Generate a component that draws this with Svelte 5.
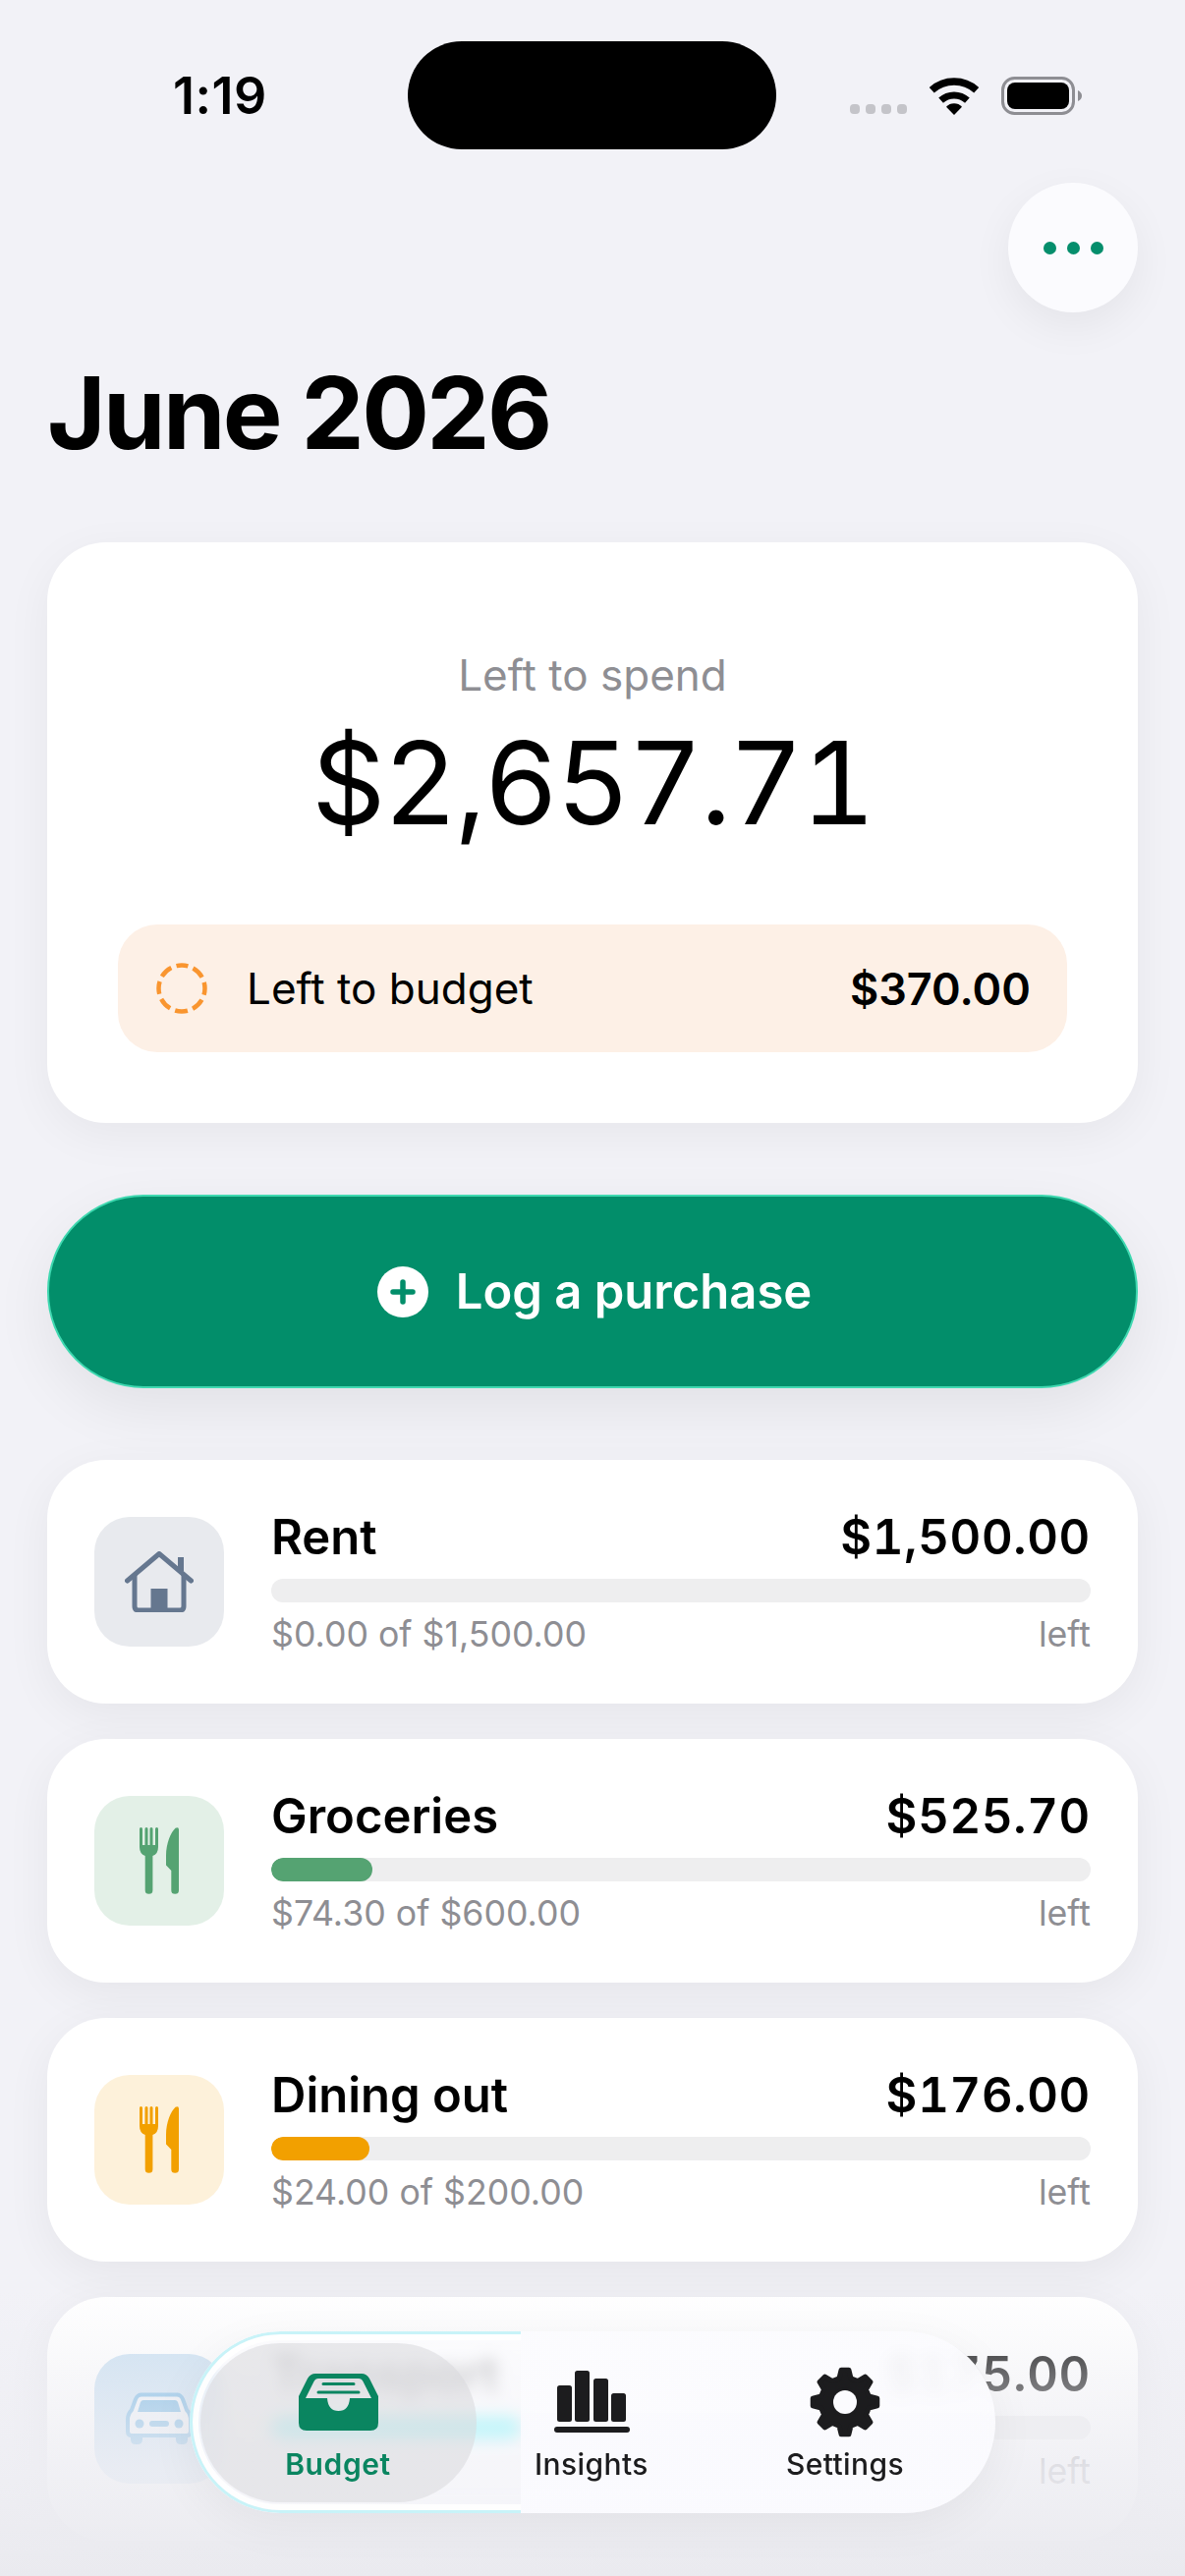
<script>
  // gear outline: 8 teeth, computed so they stay evenly spaced
  function gearPath() {
    const teeth = 8, cx = 36, cy = 36, outer = 33, root = 25;
    let pts = [];
    for (let i = 0; i < teeth; i++) {
      const a = (i * 2 * Math.PI) / teeth - Math.PI / 2;
      const step = Math.PI / teeth;
      pts.push([root, a - step * 0.62], [outer, a - step * 0.3], [outer, a + step * 0.3], [root, a + step * 0.62]);
    }
    const d = pts.map(([r, a], i) => (i ? 'L' : 'M') + (cx + r * Math.cos(a)).toFixed(2) + ' ' + (cy + r * Math.sin(a)).toFixed(2));
    return d.join(' ') + ' Z M36 24 a12 12 0 1 0 0.01 0 Z';
  }

  const rows = [
    { name: 'Rent', left: '$1,500.00', sub: '$0.00 of $1,500.00', pct: 0, kind: 'rent', icon: 'house' },
    { name: 'Groceries', left: '$525.70', sub: '$74.30 of $600.00', pct: 12.4, kind: 'groceries', icon: 'cutlery' },
    { name: 'Dining out', left: '$176.00', sub: '$24.00 of $200.00', pct: 12, kind: 'dining', icon: 'cutlery' },
    { name: 'Transport', left: '$175.00', sub: '', pct: 30.5, kind: 'transport', icon: 'car' }
  ];
</script>

<div class="page">
  <div class="status">
    <span class="time">1:19</span>
    <div class="island"></div>
    <div class="status-icons">
      <div class="signal"><i></i><i></i><i></i><i></i></div>
      <svg width="52" height="38" viewBox="0 0 52 38">
        <path d="M3.25 12.7 A34 34 0 0 1 48.75 12.7" fill="none" stroke="#000" stroke-width="7.5"/>
        <path d="M12.6 23.1 A20 20 0 0 1 39.4 23.1" fill="none" stroke="#000" stroke-width="7"/>
        <path d="M26 38 L18 29.8 A11 11 0 0 1 34 29.8 Z" fill="#000"/>
      </svg>
      <svg width="82" height="39" viewBox="0 0 82 39">
        <rect x="1.5" y="1.5" width="72" height="36" rx="12" fill="none" stroke="#8e8e93" stroke-width="3"/>
        <rect x="6" y="6" width="63" height="27" rx="8" fill="#000"/>
        <path d="M78 14 Q82 16 82 19.5 Q82 23 78 25 Z" fill="#8e8e93"/>
      </svg>
    </div>
  </div>

  <div class="top-action">
    <button class="menu-btn" aria-label="More"><i></i><i></i><i></i></button>
  </div>

  <h1>June 2026</h1>

  <section class="summary">
    <div class="summary-label">Left to spend</div>
    <div class="summary-amount">$2,657.71</div>
    <div class="to-budget">
      <svg width="52" height="52" viewBox="0 0 52 52">
        <circle cx="26" cy="26" r="23.5" fill="none" stroke="#f9952f" stroke-width="4.5" stroke-dasharray="13 5.45" stroke-dashoffset="6.5" transform="rotate(-90 26 26)"/>
      </svg>
      <span class="to-budget-label">Left to budget</span>
      <span class="to-budget-value">$370.00</span>
    </div>
  </section>

  <button class="log-btn">
    <svg width="52" height="52" viewBox="0 0 52 52">
      <circle cx="26" cy="26" r="26" fill="#fff"/>
      <path d="M26 16 V36 M16 26 H36" stroke="#028e6a" stroke-width="5.5" stroke-linecap="round"/>
    </svg>
    Log a purchase
  </button>

  <div class="rows">
    {#each rows as row}
      <div class="row {row.kind}">
        <div class="row-icon">
          {#if row.icon === 'house'}
            <svg width="70" height="62" viewBox="0 0 70 62">
              <path d="M54 6 H60 V20 H54 Z" fill="currentColor"/>
              <path d="M2.5 30 L35 2.5 L67.5 30" fill="none" stroke="currentColor" stroke-width="5" stroke-linecap="round" stroke-linejoin="round"/>
              <path d="M10 24 V56 Q10 60 14 60 H56 Q60 60 60 56 V24" fill="none" stroke="currentColor" stroke-width="5"/>
              <rect x="26.5" y="38" width="17" height="23" fill="currentColor"/>
            </svg>
          {:else if row.icon === 'cutlery'}
            <svg width="40" height="68" viewBox="0 0 40 68">
              <path d="M0 1.5 a1.5 1.5 0 0 1 3 0 V18 H5.5 V1.5 a1.5 1.5 0 0 1 3 0 V18 H10.5 V1.5 a1.5 1.5 0 0 1 3 0 V18 H16 V1.5 a1.5 1.5 0 0 1 3 0 V20 Q19 27 13.4 29 V64 a3.85 3.85 0 0 1 -7.7 0 V29 Q0 27 0 20 Z" fill="currentColor"/>
              <path d="M40 2.5 V64 a3.85 3.85 0 0 1 -7.7 0 V44 L27 38.5 V29 C27 16 32 5 36.5 0.8 Q40 -0.8 40 2.5 Z" fill="currentColor"/>
            </svg>
          {:else}
            <svg width="68" height="54" viewBox="0 0 68 54">
              <path d="M5 42 H17 V48 Q17 53 12 53 H10 Q5 53 5 48 Z M51 42 H63 V48 Q63 53 58 53 H56 Q51 53 51 48 Z" fill="currentColor"/>
              <path d="M16 2.5 H52 Q56 2.5 58 7 L62 18 Q66 22 66 28 V40 Q66 44 62 44 H6 Q2 44 2 40 V28 Q2 22 6 18 L10 7 Q12 2.5 16 2.5 Z" fill="#eef3f8" stroke="currentColor" stroke-width="4"/>
              <path d="M18 8 H50 Q52 8 53 10 L56 20 H12 L15 10 Q16 8 18 8 Z" fill="currentColor"/>
              <circle cx="14" cy="32" r="4.5" fill="currentColor"/>
              <circle cx="54" cy="32" r="4.5" fill="currentColor"/>
              <rect x="24" y="29" width="20" height="6" rx="3" fill="currentColor"/>
            </svg>
          {/if}
        </div>
        <div class="row-body">
          <div class="row-line">
            <span class="row-name">{row.name}</span>
            <span class="row-left">{row.left}</span>
          </div>
          <div class="bar"><div class="bar-fill" style:width="{row.pct}%"></div></div>
          <div class="row-sub">
            <span>{row.sub}</span>
            <span>left</span>
          </div>
        </div>
      </div>
    {/each}
  </div>

  <div class="fade"></div>

  <nav class="tabbar">
    <div class="tab active">
      <div class="tab-icon">
        <svg width="81" height="58" viewBox="0 0 81 58">
          <path fill-rule="evenodd" d="M17 0 H64 Q69 0 72 5 L81 23 V50 Q81 58 73 58 H8 Q0 58 0 50 V23 L9 5 Q12 0 17 0 Z M20 5 Q17 5 15.5 8 L7 25 H29 Q30 38 40.5 38 Q51 38 52 25 H74 L65.5 8 Q64 5 61 5 Z" fill="currentColor"/>
          <path d="M25 10.5 H56 M20 19 H61" stroke="currentColor" stroke-width="3" stroke-linecap="round"/>
        </svg>
      </div>
      <span class="tab-label">Budget</span>
    </div>
    <div class="tab">
      <div class="tab-icon">
        <svg width="77" height="64" viewBox="0 0 77 64">
          <rect x="3" y="15" width="15" height="37" rx="2.5" fill="currentColor"/>
          <rect x="21" y="0" width="15" height="52" rx="2.5" fill="currentColor"/>
          <rect x="40" y="8" width="15" height="44" rx="2.5" fill="currentColor"/>
          <rect x="58" y="23" width="15" height="29" rx="2.5" fill="currentColor"/>
          <rect x="0" y="57" width="77" height="6" rx="3" fill="currentColor"/>
        </svg>
      </div>
      <span class="tab-label">Insights</span>
    </div>
    <div class="tab">
      <div class="tab-icon">
        <svg width="72" height="72" viewBox="0 0 72 72">
          <path d={gearPath()} fill="currentColor" fill-rule="evenodd" stroke="currentColor" stroke-width="5" stroke-linejoin="round"/>
          <circle cx="36" cy="36" r="12" fill="#fbfbfe"/>
        </svg>
      </div>
      <span class="tab-label">Settings</span>
    </div>
  </nav>
</div>

<style>
  :global(body) {
    margin: 0;
    background: #f2f2f7;
  }

  .page {
    position: relative;
    width: 1206px;
    height: 2622px;
    overflow: hidden;
    background: #f2f2f7;
    font-family: Inter, "Liberation Sans", sans-serif;
    color: #000;
  }

  .status {
    display: flex;
    align-items: center;
    height: 110px;
    padding: 42px 0 0 176px;
  }
  .time {
    width: 239px;
    font-size: 52px;
    font-weight: 600;
    letter-spacing: 0.5px;
  }
  .island {
    width: 375px;
    height: 110px;
    border-radius: 55px;
    background: #000;
  }
  .status-icons {
    display: flex;
    align-items: flex-end;
    gap: 22px;
    margin-left: 75px;
  }
  .signal {
    display: flex;
    gap: 6px;
    padding-bottom: 1px;
  }
  .signal i {
    width: 10px;
    height: 10px;
    border-radius: 4px;
    background: #c4c4c9;
  }

  .top-action {
    display: flex;
    justify-content: flex-end;
    padding: 34px 48px 0 0;
  }
  .menu-btn {
    display: flex;
    align-items: center;
    justify-content: center;
    gap: 11px;
    width: 132px;
    height: 132px;
    padding: 0;
    border: 0;
    border-radius: 50%;
    background: #fbfbfe;
    box-shadow: 0 14px 44px rgba(0, 0, 0, 0.06);
  }
  .menu-btn i {
    width: 13px;
    height: 13px;
    border-radius: 50%;
    background: #058e6c;
  }

  h1 {
    margin: 41px 48px 71px;
    font-size: 102px;
    line-height: 122px;
    font-weight: 700;
    letter-spacing: -2.6px;
  }

  .summary {
    margin: 0 48px;
    padding: 108px 72px 72px;
    border-radius: 60px;
    background: #fff;
    box-shadow: 0 12px 48px rgba(0, 0, 0, 0.05);
  }
  .summary-label {
    text-align: center;
    font-size: 44px;
    line-height: 54px;
    color: #8e8e93;
  }
  .summary-amount {
    margin-top: 13px;
    text-align: center;
    font-size: 117px;
    line-height: 140px;
    font-weight: 400;
    font-variant-numeric: tabular-nums;
    letter-spacing: -2.4px;
  }
  .to-budget {
    display: flex;
    align-items: center;
    height: 130px;
    margin-top: 74px;
    padding: 0 37px 0 39px;
    border-radius: 40px;
    background: #fdf0e6;
  }
  .to-budget-label {
    flex: 1;
    margin-left: 40px;
    font-size: 44px;
  }
  .to-budget-value {
    font-size: 45px;
    font-weight: 600;
  }

  .log-btn {
    display: flex;
    align-items: center;
    justify-content: center;
    gap: 28px;
    box-sizing: border-box;
    width: 1110px;
    height: 197px;
    margin: 73px 48px;
    padding: 0 0 0 4px;
    border: 2px solid #3fd8b0;
    border-radius: 98px;
    background: #028e6a;
    color: #fff;
    font-family: inherit;
    font-size: 49px;
    font-weight: 600;
    box-shadow: 0 20px 60px rgba(0, 0, 0, 0.07);
  }

  .rows {
    display: flex;
    flex-direction: column;
    gap: 36px;
    margin: 0 48px;
  }
  .row {
    display: flex;
    align-items: center;
    gap: 48px;
    box-sizing: border-box;
    height: 248px;
    padding: 0 48px;
    border-radius: 60px;
    background: #fff;
    box-shadow: 0 12px 48px rgba(0, 0, 0, 0.055);
  }
  .row-icon {
    display: flex;
    flex: none;
    align-items: center;
    justify-content: center;
    width: 132px;
    height: 132px;
    border-radius: 36px;
  }
  .row-body {
    flex: 1;
  }
  .row-line,
  .row-sub {
    display: flex;
    justify-content: space-between;
  }
  .row-line {
    font-size: 49px;
    line-height: 58px;
    font-weight: 600;
  }
  .row-left {
    font-variant-numeric: tabular-nums;
    letter-spacing: 0.7px;
  }
  .bar {
    height: 24px;
    margin-top: 13px;
    border-radius: 12px;
    background: #eeeeef;
    overflow: hidden;
  }
  .bar-fill {
    height: 100%;
    border-radius: 12px;
  }
  .row-sub {
    margin-top: 10px;
    font-size: 35.7px;
    line-height: 44px;
    color: #8e8e93;
  }

  .rent .row-icon { background: #e8eaee; color: #65778f; }
  .groceries .row-icon { background: #e3f0e7; color: #55a372; }
  .groceries .bar-fill { background: #55a372; }
  .dining .row-icon { background: #fdf1da; color: #f2a000; }
  .dining .bar-fill { background: #f2a000; }
  .transport .row-icon { background: #c9e0f2; color: #6db3e2; }
  .transport .row-name { color: #555; }
  /* stays above the fade, only the glass bar washes it out */
  .transport .bar-fill {
    position: relative;
    z-index: 1;
    background: #8feff6;
  }

  /* scroll-edge fade that sits over the last row */
  .fade {
    position: absolute;
    left: 0;
    right: 0;
    top: 2330px;
    bottom: 0;
    pointer-events: none;
    background: linear-gradient(to bottom,
      rgba(238, 238, 243, 0),
      rgba(238, 238, 243, 0.45) 30%,
      rgba(238, 238, 243, 0.85) 62%,
      rgba(234, 234, 239, 1));
  }

  .tabbar {
    position: absolute;
    z-index: 2;
    left: 193px;
    top: 2373px;
    display: flex;
    box-sizing: border-box;
    width: 820px;
    height: 185px;
    padding: 0 24px 0 22px;
    border-radius: 93px;
    background: linear-gradient(to right, rgba(251, 251, 254, 0.5) 337px, rgba(251, 251, 254, 0.93) 337px);
    backdrop-filter: blur(8px);
    box-shadow: 0 12px 48px rgba(0, 0, 0, 0.05);
  }
  /* glass rim on the part of the bar around the active tab */
  .tabbar::before {
    content: "";
    position: absolute;
    inset: 0;
    box-sizing: border-box;
    border: 3px solid #c8f3f8;
    border-radius: 93px;
    box-shadow: inset 0 0 0 6px rgba(255, 255, 255, 0.85);
    -webkit-mask-image: linear-gradient(to right, #000 337px, transparent 337px);
    mask-image: linear-gradient(to right, #000 337px, transparent 337px);
  }
  .tab {
    position: relative;
    display: flex;
    flex-direction: column;
    align-items: center;
    width: 258px;
    padding-top: 36px;
    color: #1c1c1e;
  }
  .tab.active {
    color: #0a8560;
  }
  .tab.active::before {
    content: "";
    position: absolute;
    left: -11px;
    right: -12px;
    top: 12px;
    bottom: 11px;
    border-radius: 81px;
    background: rgba(216, 217, 221, 0.55);
  }
  .tab-icon {
    position: relative;
    display: flex;
    align-items: center;
    justify-content: center;
    height: 72px;
  }
  .tab-label {
    position: relative;
    margin-top: 9px;
    font-size: 30px;
    line-height: 36px;
    font-weight: 500;
    letter-spacing: 0.4px;
  }
  .tab.active .tab-label {
    font-weight: 600;
    letter-spacing: 0.6px;
  }
</style>
